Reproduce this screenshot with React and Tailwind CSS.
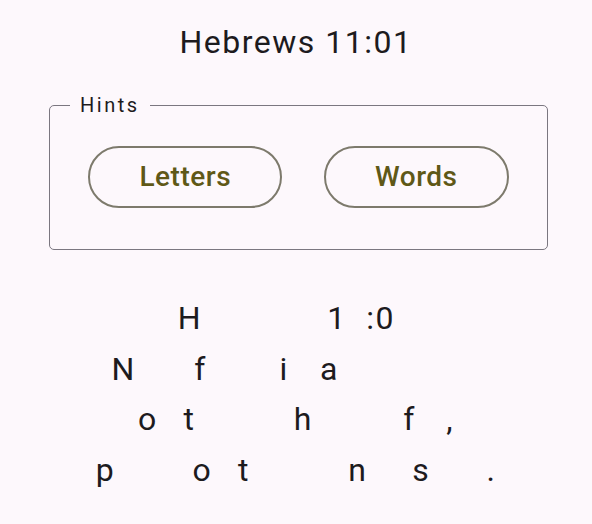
const VERSE = [
  // each line: text and the indices that are shown
  { text: 'Hebrews 11:01', shown: [0, 8, 10, 11] },
  { text: 'Now faith is assurance', shown: [0, 4, 10, 13] },
  { text: 'of things hoped for,', shown: [0, 3, 10, 16, 19] },
  { text: 'proof of things not seen.', shown: [0, 6, 9, 16, 20, 24] },
]

function HintButton({ label }) {
  return (
    <button className="h-[62px] rounded-full border-2 border-[#7d7a6c] px-[49px] text-[28px] font-medium tracking-[0.5px] text-[#5f5817]">
      {label}
    </button>
  )
}

export default function App() {
  return (
    <div className="min-h-[524px] bg-[#fdf8fc] font-['Roboto','Liberation_Sans',sans-serif] text-[#1d1b1e]">
      <h1 className="pt-[22px] text-center text-[32px] leading-[40px] tracking-[1.5px]">Hebrews 11:01</h1>

      <fieldset className="ml-[49px] mt-[31px] w-[499px] rounded-[5px] border border-[#7b7780]">
        <legend className="ml-[20px] px-[10px] text-[20px] leading-[24px] tracking-[2.5px]">Hints</legend>
        <div className="flex justify-center gap-[42px] pt-[29px] pb-[41px]">
          <HintButton label="Letters" />
          <HintButton label="Words" />
        </div>
      </fieldset>

      <div className="mt-[43px] flex flex-col items-center text-[32px] leading-[50.5px] tracking-[1.5px] [word-spacing:3.75px]">
        {VERSE.map((line, i) => (
          <div key={i} className="whitespace-pre">
            {line.text.split('').map((ch, j) => (
              <span key={j} className={line.shown.includes(j) ? '' : 'text-transparent'}>
                {ch}
              </span>
            ))}
          </div>
        ))}
      </div>
    </div>
  )
}
